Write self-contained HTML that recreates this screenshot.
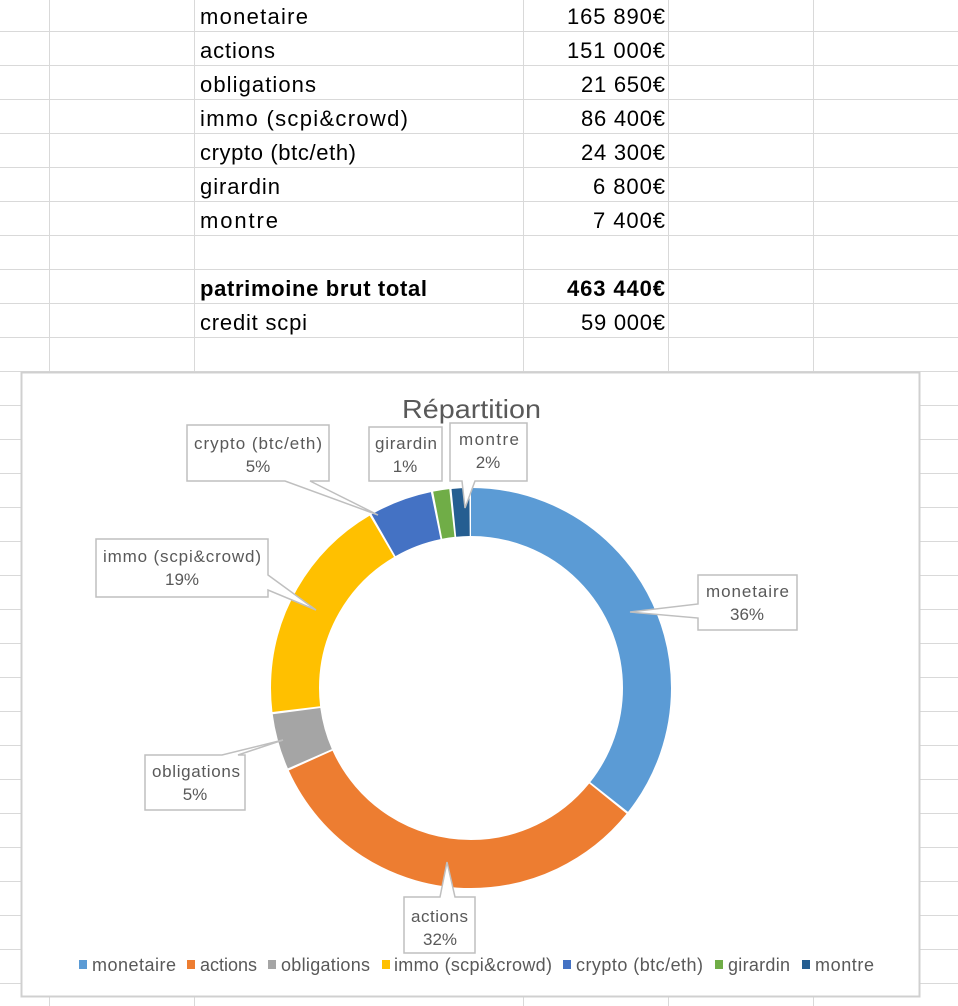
<!DOCTYPE html>
<html><head><meta charset="utf-8"><style>
html,body{margin:0;padding:0;background:#fff;width:958px;height:1006px;overflow:hidden}
svg{display:block}
text{font-family:"Liberation Sans",sans-serif}
</style></head><body>
<svg width="958" height="1006" viewBox="0 0 958 1006">
<g stroke="#d9d9d9" stroke-width="1">
<line x1="49.5" y1="0" x2="49.5" y2="1006"/><line x1="194.5" y1="0" x2="194.5" y2="1006"/>
<line x1="523.5" y1="0" x2="523.5" y2="1006"/><line x1="668.5" y1="0" x2="668.5" y2="1006"/>
<line x1="813.5" y1="0" x2="813.5" y2="1006"/>
<line x1="0" y1="31.5" x2="958" y2="31.5"/><line x1="0" y1="65.5" x2="958" y2="65.5"/>
<line x1="0" y1="99.5" x2="958" y2="99.5"/><line x1="0" y1="133.5" x2="958" y2="133.5"/>
<line x1="0" y1="167.5" x2="958" y2="167.5"/><line x1="0" y1="201.5" x2="958" y2="201.5"/>
<line x1="0" y1="235.5" x2="958" y2="235.5"/><line x1="0" y1="269.5" x2="958" y2="269.5"/>
<line x1="0" y1="303.5" x2="958" y2="303.5"/><line x1="0" y1="337.5" x2="958" y2="337.5"/>
<line x1="0" y1="371.5" x2="958" y2="371.5"/><line x1="0" y1="405.5" x2="958" y2="405.5"/>
<line x1="0" y1="439.5" x2="958" y2="439.5"/><line x1="0" y1="473.5" x2="958" y2="473.5"/>
<line x1="0" y1="507.5" x2="958" y2="507.5"/><line x1="0" y1="541.5" x2="958" y2="541.5"/>
<line x1="0" y1="575.5" x2="958" y2="575.5"/><line x1="0" y1="609.5" x2="958" y2="609.5"/>
<line x1="0" y1="643.5" x2="958" y2="643.5"/><line x1="0" y1="677.5" x2="958" y2="677.5"/>
<line x1="0" y1="711.5" x2="958" y2="711.5"/><line x1="0" y1="745.5" x2="958" y2="745.5"/>
<line x1="0" y1="779.5" x2="958" y2="779.5"/><line x1="0" y1="813.5" x2="958" y2="813.5"/>
<line x1="0" y1="847.5" x2="958" y2="847.5"/><line x1="0" y1="881.5" x2="958" y2="881.5"/>
<line x1="0" y1="915.5" x2="958" y2="915.5"/><line x1="0" y1="949.5" x2="958" y2="949.5"/>
<line x1="0" y1="983.5" x2="958" y2="983.5"/>
</g>
<g font-size="22" fill="#000" lengthAdjust="spacingAndGlyphs">
<text x="200" y="24" textLength="108">monetaire</text><text x="665" y="24" text-anchor="end" textLength="98">165 890€</text>
<text x="200" y="58" textLength="75">actions</text><text x="665" y="58" text-anchor="end" textLength="98">151 000€</text>
<text x="200" y="92" textLength="116">obligations</text><text x="665" y="92" text-anchor="end" textLength="84">21 650€</text>
<text x="200" y="126" textLength="208">immo (scpi&amp;crowd)</text><text x="665" y="126" text-anchor="end" textLength="84">86 400€</text>
<text x="200" y="160" textLength="156">crypto (btc/eth)</text><text x="665" y="160" text-anchor="end" textLength="84">24 300€</text>
<text x="200" y="194" textLength="80">girardin</text><text x="665" y="194" text-anchor="end" textLength="72">6 800€</text>
<text x="200" y="228" textLength="78">montre</text><text x="665" y="228" text-anchor="end" textLength="72">7 400€</text>
<text x="200" y="296" font-weight="bold" textLength="227">patrimoine brut total</text><text x="665" y="296" text-anchor="end" font-weight="bold" textLength="98">463 440€</text>
<text x="200" y="330" textLength="107">credit scpi</text><text x="665" y="330" text-anchor="end" textLength="84">59 000€</text>
</g>
<rect x="21.5" y="372.5" width="898" height="624" fill="#fff" stroke="#d0d0d0" stroke-width="2"/>
<text x="402" y="418" font-size="26" fill="#595959" textLength="139" lengthAdjust="spacingAndGlyphs">Répartition</text>
<g fill="none" stroke-width="48" transform="rotate(-90 471 688)">
<circle cx="471" cy="688" r="176" stroke="#5B9BD5" stroke-dasharray="393.9 2000" stroke-dashoffset="0"/>
<circle cx="471" cy="688" r="176" stroke="#ED7D31" stroke-dasharray="358.3 2000" stroke-dashoffset="-395.9"/>
<circle cx="471" cy="688" r="176" stroke="#A5A5A5" stroke-dasharray="49.6 2000" stroke-dashoffset="-756.2"/>
<circle cx="471" cy="688" r="176" stroke="#FFC000" stroke-dasharray="204.1 2000" stroke-dashoffset="-807.8"/>
<circle cx="471" cy="688" r="176" stroke="#4472C4" stroke-dasharray="55.9 2000" stroke-dashoffset="-1013.9"/>
<circle cx="471" cy="688" r="176" stroke="#70AD47" stroke-dasharray="14.3 2000" stroke-dashoffset="-1071.9"/>
<circle cx="471" cy="688" r="176" stroke="#255E91" stroke-dasharray="15.7 2000" stroke-dashoffset="-1088.2"/>
</g>
<g fill="#fff" stroke="#bfbfbf" stroke-width="1.5">
<polygon points="187,425 329,425 329,481 310,481 378,515 285,481 187,481"/>
<polygon points="369,427 442,427 442,481 369,481"/>
<polygon points="450,423 527,423 527,481 475,481 465,508 462,481 450,481"/>
<polygon points="96,539 268,539 268,575 316,610 268,590 268,597 96,597"/>
<polygon points="698,575 797,575 797,630 698,630 698,618 630,612 698,604"/>
<polygon points="145,755 222,755 283,740 238,755 245,755 245,810 145,810"/>
<polygon points="404,897 440,897 447,862 455,897 475,897 475,953 404,953"/>
</g>
<g font-size="17" fill="#595959" lengthAdjust="spacingAndGlyphs">
<text x="194" y="449" textLength="128">crypto (btc/eth)</text><text x="258" y="472" text-anchor="middle">5%</text>
<text x="375" y="449" textLength="62">girardin</text><text x="405" y="472" text-anchor="middle">1%</text>
<text x="459" y="445" textLength="60">montre</text><text x="488" y="468" text-anchor="middle">2%</text>
<text x="103" y="562" textLength="158">immo (scpi&amp;crowd)</text><text x="182" y="585" text-anchor="middle">19%</text>
<text x="706" y="597" textLength="83">monetaire</text><text x="747" y="620" text-anchor="middle">36%</text>
<text x="152" y="777" textLength="88">obligations</text><text x="195" y="800" text-anchor="middle">5%</text>
<text x="411" y="922" textLength="57">actions</text><text x="440" y="945" text-anchor="middle">32%</text>
</g>
<g font-size="18" fill="#595959" lengthAdjust="spacingAndGlyphs">
<rect x="79" y="960" width="8" height="9" fill="#5B9BD5"/><text x="92" y="971" textLength="84">monetaire</text>
<rect x="187" y="960" width="8" height="9" fill="#ED7D31"/><text x="200" y="971" textLength="57">actions</text>
<rect x="268" y="960" width="8" height="9" fill="#A5A5A5"/><text x="281" y="971" textLength="89">obligations</text>
<rect x="382" y="960" width="8" height="9" fill="#FFC000"/><text x="394" y="971" textLength="158">immo (scpi&amp;crowd)</text>
<rect x="563" y="960" width="8" height="9" fill="#4472C4"/><text x="576" y="971" textLength="127">crypto (btc/eth)</text>
<rect x="715" y="960" width="8" height="9" fill="#70AD47"/><text x="728" y="971" textLength="62">girardin</text>
<rect x="802" y="960" width="8" height="9" fill="#255E91"/><text x="815" y="971" textLength="59">montre</text>
</g>
</svg>
</body></html>
